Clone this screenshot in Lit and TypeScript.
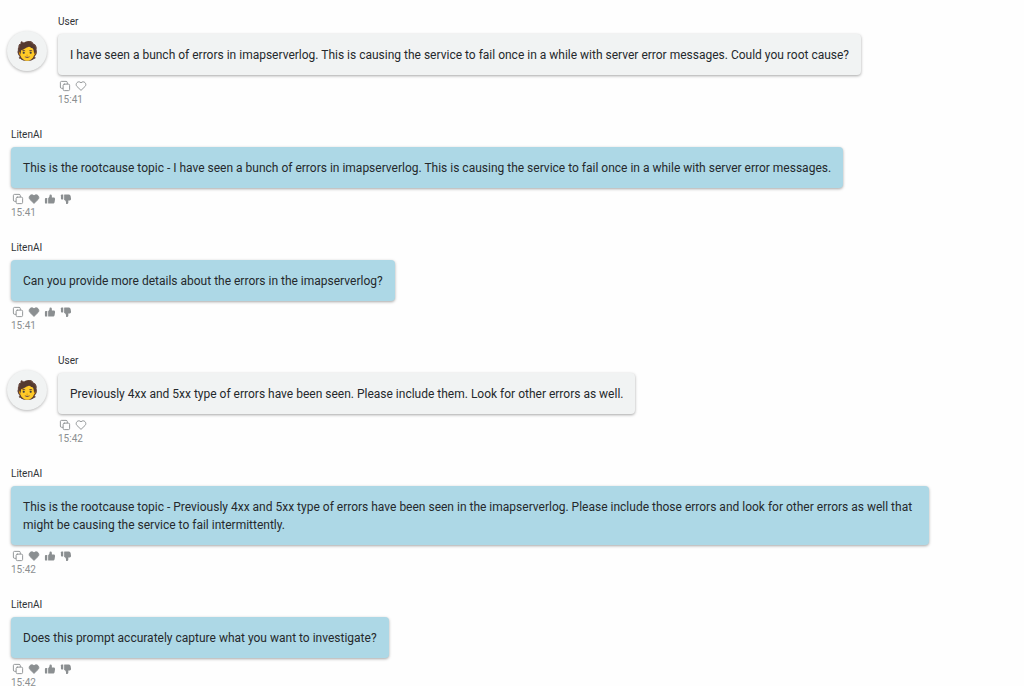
import { LitElement, html, css, svg } from "lit";
import { customElement, property } from "lit/decorators.js";

interface Message {
  role: "user" | "bot";
  name: string;
  text: string;
  time: string;
}

const MESSAGES: Message[] = [
  {
    role: "user",
    name: "User",
    text: "I have seen a bunch of errors in imapserverlog. This is causing the service to fail once in a while with server error messages. Could you root cause?",
    time: "15:41",
  },
  {
    role: "bot",
    name: "LitenAI",
    text: "This is the rootcause topic - I have seen a bunch of errors in imapserverlog. This is causing the service to fail once in a while with server error messages.",
    time: "15:41",
  },
  {
    role: "bot",
    name: "LitenAI",
    text: "Can you provide more details about the errors in the imapserverlog?",
    time: "15:41",
  },
  {
    role: "user",
    name: "User",
    text: "Previously 4xx and 5xx type of errors have been seen. Please include them. Look for other errors as well.",
    time: "15:42",
  },
  {
    role: "bot",
    name: "LitenAI",
    text: "This is the rootcause topic - Previously 4xx and 5xx type of errors have been seen in the imapserverlog. Please include those errors and look for other errors as well that might be causing the service to fail intermittently.",
    time: "15:42",
  },
  {
    role: "bot",
    name: "LitenAI",
    text: "Does this prompt accurately capture what you want to investigate?",
    time: "15:42",
  },
];

const HEART =
  "M12 21.500L3 12.800C-1.500 7.500 5.500-1 12 5C18.500-1 25.500 7.500 21 12.800z";

const ICONS = {
  copy: svg`<g fill="none" stroke="currentColor" stroke-width="2" stroke-linejoin="round" stroke-linecap="round">
    <rect x="8" y="8" width="14" height="14" rx="2.5"/>
    <path d="M17 7V4.500a2.500 2.500 0 0 0 -2.500 -2.500H4.500a2.500 2.500 0 0 0 -2.500 2.500v10a2.500 2.500 0 0 0 2.500 2.500H7"/></g>`,
  heart: svg`<path d=${HEART} fill="none" stroke="currentColor" stroke-width="2" stroke-linejoin="round"/>`,
  heartFilled: svg`<path d=${HEART} fill="currentColor" stroke="currentColor" stroke-width="2" stroke-linejoin="round"/>`,
  up: svg`<g fill="currentColor"><path d="M13 2a3 3 0 0 1 3 2.800V9h4a3 3 0 0 1 3 3v.2l-1 6.200c-.5 2-1.900 3.400-3.500 3.600H9a1 1 0 0 1-1-1V10.600a1 1 0 0 1 .5-.8A5 5 0 0 0 11 5.700V4a2 2 0 0 1 2-2z"/>
    <path d="M5 10a1 1 0 0 1 1 1v10a1 1 0 0 1-1 1H3a2 2 0 0 1-2-2v-8a2 2 0 0 1 2-2z"/></g>`,
  down: svg`<g fill="currentColor"><path d="M14 23a3 3 0 0 0 3-2.800V15h3a3 3 0 0 0 3-3v-.2l-1-6.200c-.5-2-1.900-3.400-3.500-3.600H9a1 1 0 0 0-1 1v10.400a1 1 0 0 0 .5.8A5 5 0 0 1 12 18.300V21a2 2 0 0 0 2 2z"/>
    <path d="M5 13a1 1 0 0 0 1-1V3a1 1 0 0 0-1-1H3a2 2 0 0 0-2 2v7a2 2 0 0 0 2 2z"/></g>`,
};

@customElement("chat-message")
export class ChatMessage extends LitElement {
  @property({ attribute: false }) message!: Message;

  static styles = css`
    :host {
      display: block;
    }
    .row {
      display: flex;
      align-items: flex-start;
      gap: 11px;
    }
    .bot {
      padding-left: 4px;
    }
    .avatar {
      flex: none;
      width: 40px;
      height: 40px;
      margin-top: 17px;
      border-radius: 50%;
      display: grid;
      place-items: center;
      background: #f1f3f3;
      box-shadow: 0 1px 3px rgba(0, 0, 0, 0.28);
      font-size: 18px;
      line-height: 22px;
    }
    .column {
      flex: 1;
      min-width: 0;
      display: flex;
      flex-direction: column;
      align-items: flex-start;
    }
    .name {
      font-size: 10px;
      line-height: 16px;
      color: #303336;
      margin-bottom: 4px;
    }
    .bubble {
      box-sizing: border-box;
      max-width: calc(100% - 86px);
      margin: 0;
      padding: 12px 12px 11px;
      border-radius: 4px;
      font-size: 12px;
      line-height: 18px;
      color: #25292c;
      background: #f1f3f3;
      box-shadow: 0 1px 3px rgba(0, 0, 0, 0.35);
    }
    .bot .bubble {
      background: #add8e6;
    }
    .actions {
      display: flex;
      gap: 4px;
      margin-top: 4px;
      padding-left: 1px;
    }
    .action {
      display: block;
      width: 12px;
      height: 14px;
      padding: 0;
      border: 0;
      background: none;
      color: #8b8f91;
      cursor: pointer;
    }
    .glyph {
      display: block;
      width: 12px;
      height: 12px;
      margin: 1px 0;
    }
    .time {
      font-size: 10px;
      line-height: 14px;
      color: #8b8f91;
    }
  `;

  private action(label: string, icon: unknown) {
    return html`<button class="action" type="button" aria-label=${label}>
      <svg class="glyph" viewBox="-1 -1 26 26" aria-hidden="true">${icon}</svg>
    </button>`;
  }

  private avatar() {
    return html`<div class="avatar" role="img" aria-label="User avatar">🧑</div>`;
  }

  render() {
    const { role, name, text, time } = this.message;
    const isUser = role === "user";
    return html`<article class="row ${role}">
      ${isUser ? this.avatar() : null}
      <div class="column">
        <span class="name">${name}</span>
        <p class="bubble">${text}</p>
        <div class="actions">
          ${this.action("Copy", ICONS.copy)}
          ${isUser
            ? this.action("Like", ICONS.heart)
            : [
                this.action("Love", ICONS.heartFilled),
                this.action("Thumbs up", ICONS.up),
                this.action("Thumbs down", ICONS.down),
              ]}
        </div>
        <time class="time">${time}</time>
      </div>
    </article>`;
  }
}

@customElement("app-root")
export class AppRoot extends LitElement {
  static styles = css`
    :host {
      display: block;
      height: 100vh;
      overflow-y: auto;
      scrollbar-width: none;
      background: #fefefe;
      font-family: Roboto, "Liberation Sans", sans-serif;
    }
    .feed {
      display: flex;
      flex-direction: column;
      gap: 20px;
      padding: 14px 9px 0 7px;
    }
  `;

  render() {
    return html`<main class="feed">
      ${MESSAGES.map((m) => html`<chat-message .message=${m}></chat-message>`)}
    </main>`;
  }
}
